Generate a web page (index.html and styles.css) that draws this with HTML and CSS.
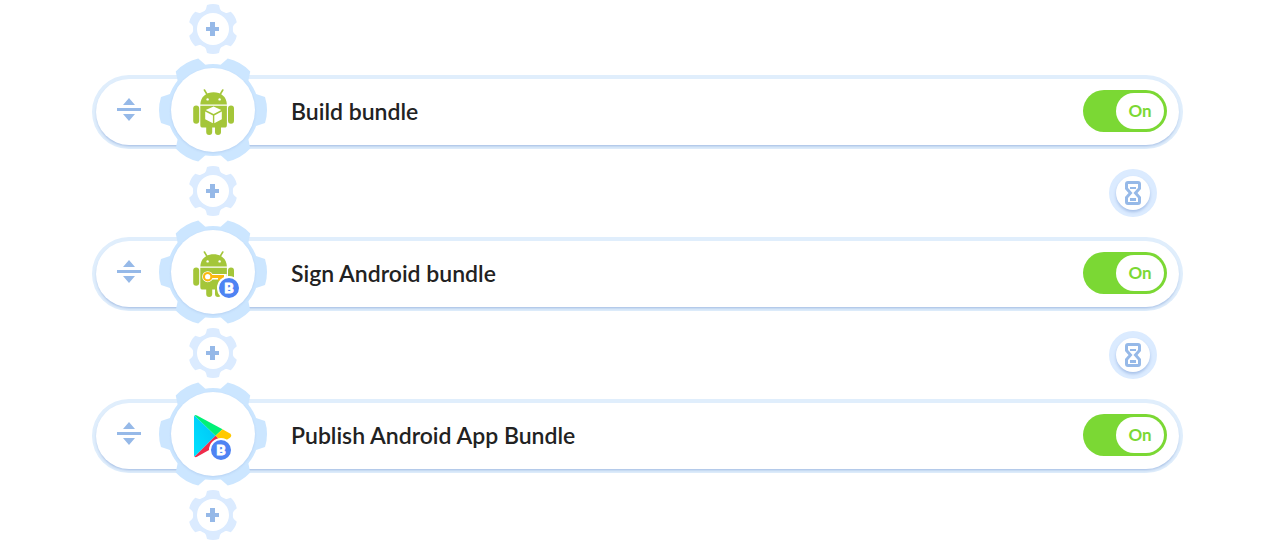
FILE: index.html
```html
<!DOCTYPE html>
<html lang="en">
  <head>
    <meta charset="UTF-8" />
    <meta name="viewport" content="width=device-width, initial-scale=1.0" />
    <title>Workflow</title>
    <link rel="stylesheet" href="styles.css">
  </head>
  <body>
    <!-- Shared shapes -->
    <svg class="sprite" aria-hidden="true">
      <symbol id="gear-small" viewBox="-25 -25 50 50">
        <g class="gear-small-fill">
          <circle r="20" />
          <g id="teeth-small">
            <path id="tooth-small" d="M-9 -17L-7 -20L-6 -24Q0 -26 6 -24L7 -20L9 -17z" />
            <use href="#tooth-small" transform="rotate(60)" />
            <use href="#tooth-small" transform="rotate(120)" />
          </g>
          <use href="#teeth-small" transform="rotate(180)" />
        </g>
        <circle r="16" fill="#fff" />
        <path class="icon-fill" d="M-3 -7h5v5h4v4h-4v5h-5v-5h-4v-4h4z" />
      </symbol>

      <symbol id="gear-large" viewBox="-54 -52 108 104">
        <g class="gear-large-fill">
          <circle r="46" />
          <g id="teeth-large">
            <path id="tooth-large" d="M40 -17L43 -16L52 -13Q56 0 52 13L43 16L40 17z" />
            <use href="#tooth-large" transform="rotate(60)" />
            <use href="#tooth-large" transform="rotate(120)" />
          </g>
          <use href="#teeth-large" transform="rotate(180)" />
        </g>
        <circle class="gear-face" r="42" />
      </symbol>

      <symbol id="android" viewBox="-54 -52 108 104">
        <g fill="#a4c639">
          <path d="M-12.7 -5.6C-12.4 -13.5 -6.5 -17.8 .6 -17.8S13.6 -13.5 13.9 -5.6z" />
          <path d="M-8.6 -20L-5.6 -15M9.8 -20L6.8 -15" stroke="#a4c639" stroke-width="1.6" stroke-linecap="round" />
          <path d="M-12.7 -4.3H13.9V15Q13.9 17.6 11.3 17.6H-10.1Q-12.7 17.6 -12.7 15z" />
          <rect x="-19.8" y="-4.4" width="6" height="18.2" rx="3" />
          <rect x="15" y="-4.4" width="6" height="18.2" rx="3" />
          <rect x="-6.8" y="12" width="6" height="13" rx="3" />
          <rect x="2" y="12" width="6" height="13" rx="3" />
        </g>
        <circle cx="-5.4" cy="-10.6" r="1.2" fill="#fff" />
        <circle cx="6.6" cy="-10.6" r="1.2" fill="#fff" />
      </symbol>

      <symbol id="hourglass" viewBox="0 0 16 24">
        <path class="icon-line" d="M3 1.5h10q1.5 0 1.5 1.5v4.5L10.5 12l4 4.5V21q0 1.5 -1.5 1.5H3q-1.5 0 -1.5 -1.5v-4.5L5.5 12l-4 -4.5V3q0 -1.5 1.5 -1.5z" />
        <path class="icon-fill" d="M5 6h6v2H5zM5 17h6v3H5z" />
      </symbol>

      <symbol id="drag" viewBox="0 0 24 24">
        <path class="icon-fill" d="M12 0l6 7H6zM0 10h24v3H0zM6 16h12l-6 7z" />
      </symbol>
    </svg>

    <main class="workflow">
      <div class="connector">
        <button class="add-step" aria-label="Add step"><svg class="gear-small"><use href="#gear-small" /></svg></button>
      </div>

      <section class="step">
        <button class="drag" aria-label="Move step"><svg class="drag-icon"><use href="#drag" /></svg></button>
        <svg class="gear" viewBox="-54 -52 108 104" aria-hidden="true">
          <use href="#gear-large" x="-54" y="-52" width="108" height="104" />
          <use href="#android" x="-54" y="-52" width="108" height="104" />
          <path d="M.6 -3.6L8.3 0L.6 4L-7.3 0zM-7.8 1.4L-.1 5.4V13.3L-7.8 9.3zM8.8 1.4L1.3 5.4V13.3L8.8 9.3z" fill="#fff" />
        </svg>
        <label class="title" for="step-build">Build bundle</label>
        <span class="toggle">
          <input type="checkbox" id="step-build" class="toggle-input" checked>
          <span class="toggle-knob">On</span>
        </span>
      </section>

      <div class="connector">
        <button class="add-step" aria-label="Add step"><svg class="gear-small"><use href="#gear-small" /></svg></button>
        <button class="wait" aria-label="Wait time"><svg class="wait-icon"><use href="#hourglass" /></svg></button>
      </div>

      <section class="step">
        <button class="drag" aria-label="Move step"><svg class="drag-icon"><use href="#drag" /></svg></button>
        <svg class="gear" viewBox="-54 -52 108 104" aria-hidden="true">
          <use href="#gear-large" x="-54" y="-52" width="108" height="104" />
          <use href="#android" x="-54" y="-52" width="108" height="104" />
          <g id="key">
            <path d="M-1 4.7H11V7.5M6.5 4.7V7.5" fill="none" stroke="#fff" stroke-width="5.5" />
            <circle cx="-5.3" cy="4.7" r="5.5" fill="#fff" />
            <circle cx="-5.3" cy="4.7" r="3.7" fill="none" stroke="#fbb80f" stroke-width="2.2" />
            <path d="M-2 3H11V8.5H8.5V7.3H7V8.5H5V6H-2z" fill="#fbb80f" />
            <circle cx="-5.8" cy="4.7" r="1.8" fill="#fff" />
          </g>
          <circle class="badge" cx="16" cy="16" r="11" />
          <text class="badge-text" x="16" y="21">B</text>
        </svg>
        <label class="title" for="step-sign">Sign Android bundle</label>
        <span class="toggle">
          <input type="checkbox" id="step-sign" class="toggle-input" checked>
          <span class="toggle-knob">On</span>
        </span>
      </section>

      <div class="connector">
        <button class="add-step" aria-label="Add step"><svg class="gear-small"><use href="#gear-small" /></svg></button>
        <button class="wait" aria-label="Wait time"><svg class="wait-icon"><use href="#hourglass" /></svg></button>
      </div>

      <section class="step">
        <button class="drag" aria-label="Move step"><svg class="drag-icon"><use href="#drag" /></svg></button>
        <svg class="gear" viewBox="-54 -52 108 104" aria-hidden="true">
          <defs>
            <linearGradient id="play-blue" x1="1" y1="0" x2="0" y2="1">
              <stop offset="0" stop-color="#00c3f5" />
              <stop offset="1" stop-color="#00e2ff" />
            </linearGradient>
          </defs>
          <use href="#gear-large" x="-54" y="-52" width="108" height="104" />
          <path d="M-18.5 -18.5L2.5 1.8L-18.5 22.8Q-19 22 -19 21V-17Q-19 -18 -18.5 -18.5z" fill="url(#play-blue)" />
          <path d="M-18.5 -18.5Q-17.5 -19.3 -16 -18.5L9.5 -4.8L2.5 1.8z" fill="#00f076" />
          <path d="M9.5 -4.8L17 -.5Q19.5 1.5 17 3.8L9.5 8.5L2.5 1.8z" fill="#ffc900" />
          <path d="M2.5 1.8L9.5 8.5L-16 22.8Q-17.5 23.6 -18.5 22.8z" fill="#ee2b4b" />
          <circle class="badge" cx="8" cy="16" r="11" />
          <text class="badge-text" x="8" y="21">B</text>
        </svg>
        <label class="title" for="step-publish">Publish Android App Bundle</label>
        <span class="toggle">
          <input type="checkbox" id="step-publish" class="toggle-input" checked>
          <span class="toggle-knob">On</span>
        </span>
      </section>

      <div class="connector">
        <button class="add-step" aria-label="Add step"><svg class="gear-small"><use href="#gear-small" /></svg></button>
      </div>
    </main>
  </body>
</html>
```
FILE: styles.css
```css
body {
  margin: 0;
  background: #fff;
  color: #222;
  font-family: Lato, "Liberation Sans", sans-serif;
}
button {
  padding: 0;
  border: 0;
  background: none;
  cursor: pointer;
}
svg {
  display: block;
}
.sprite {
  display: none;
}
.workflow {
  padding: 0 97px 0 96px;
}
.connector {
  display: flex;
  justify-content: space-between;
  align-items: flex-start;
  padding: 21px 23px 25px 92px;
}
.connector:first-child {
  padding-top: 4px;
}
.connector:last-child {
  padding-bottom: 0;
}
.gear-small {
  width: 50px;
  height: 50px;
}
.gear-small-fill {
  fill: #dbebff;
}
.gear-large-fill {
  fill: #cce6ff;
}
.gear-face {
  fill: #fff;
  filter: drop-shadow(0 1px 1px rgba(150, 180, 225, 0.4));
}
.icon-fill {
  fill: #96b9e8;
}
.icon-line {
  fill: none;
  stroke: #96b9e8;
  stroke-width: 3;
}
.step {
  display: flex;
  align-items: center;
  box-sizing: border-box;
  height: 66px;
  padding: 0 12px 2px 21px;
  border-radius: 33px;
  background: #fff;
  box-shadow: 0 2px 3px -1px rgba(90, 130, 200, 0.5), 0 0 0 4px #e0eefc;
}
.drag {
  margin-bottom: 2px;
  cursor: grab;
}
.drag-icon {
  width: 24px;
  height: 24px;
}
.gear {
  flex: none;
  width: 108px;
  height: 104px;
  margin: -20px 24px -18px 18px;
}
.badge {
  fill: #4e83f3;
  stroke: #fff;
  stroke-width: 2;
}
.badge-text {
  fill: #fff;
  stroke: #fff;
  stroke-width: 1px;
  font-size: 14px;
  font-weight: 900;
  text-anchor: middle;
}
.title {
  flex: 1;
  font-size: 23px;
  font-weight: 600;
  line-height: 28px;
}
.toggle {
  position: relative;
  display: flex;
  justify-content: flex-end;
  box-sizing: border-box;
  width: 84px;
  height: 42px;
  padding: 3px;
  border-radius: 21px;
  background: #7bd834;
}
.toggle-input {
  position: absolute;
  inset: 0;
  width: 100%;
  height: 100%;
  margin: 0;
  opacity: 0;
  cursor: pointer;
}
.toggle-knob {
  width: 48px;
  border-radius: 18px;
  background: #fff;
  color: #7bd834;
  font-size: 17px;
  font-weight: 700;
  line-height: 36px;
  text-align: center;
}
.wait {
  display: flex;
  justify-content: center;
  align-items: center;
  width: 34px;
  height: 34px;
  margin: 10px 6px 0 0;
  border-radius: 50%;
  background: #fff;
  box-shadow: 0 2px 3px rgba(90, 130, 200, 0.4), 0 0 0 7px #dbebff;
}
.wait-icon {
  width: 16px;
  height: 24px;
}
```
